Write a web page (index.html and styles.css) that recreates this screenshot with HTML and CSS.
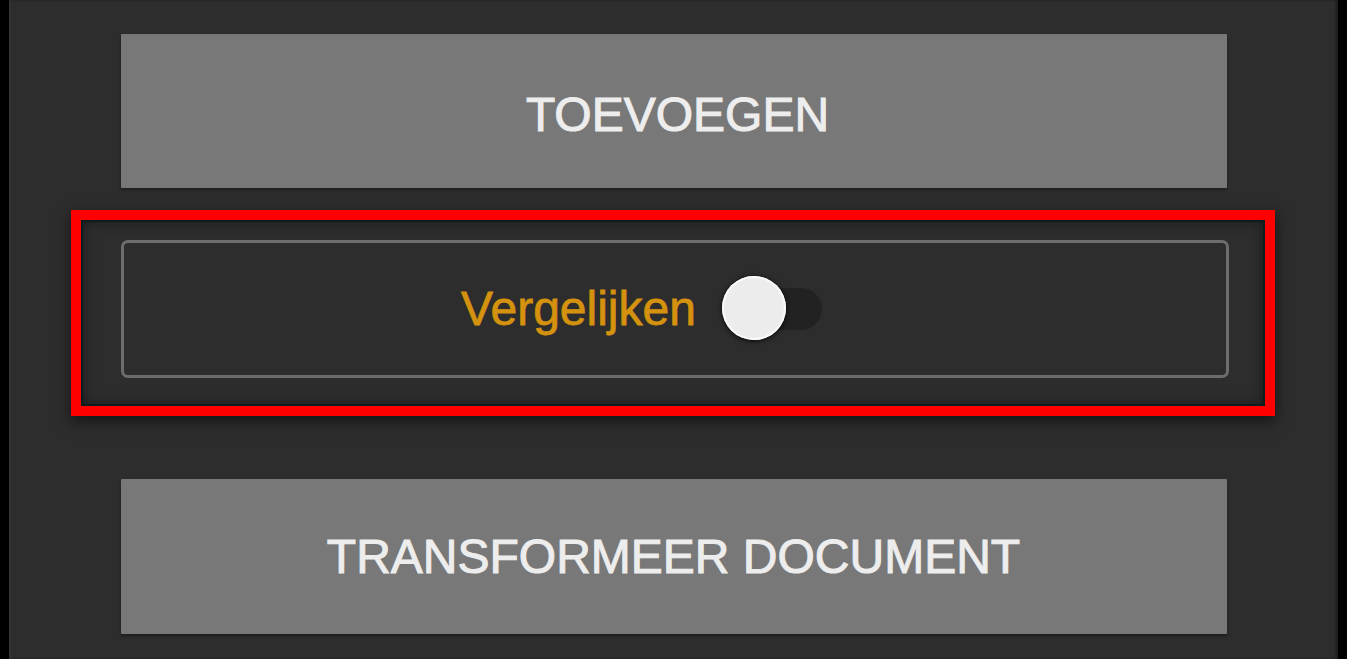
FILE: index.html
```html
<!DOCTYPE html>
<html lang="nl">
<head>
    <meta charset="UTF-8">
    <meta name="viewport" content="width=device-width, initial-scale=1.0">
    <title>Document transformeren</title>
    <link rel="stylesheet" href="styles.css">
</head>
<body>
    <div class="panel">
        <div class="stack">
            <button type="button" class="action action-top">TOEVOEGEN</button>
            <div class="highlight">
                <div class="compare-row">
                    <label for="compare" class="compare-label">Vergelijken</label>
                    <label class="switch">
                        <input type="checkbox" id="compare">
                        <span class="track"></span>
                        <span class="knob"></span>
                    </label>
                </div>
            </div>
            <button type="button" class="action action-bottom">TRANSFORMEER DOCUMENT</button>
        </div>
    </div>
</body>
</html>
```

FILE: styles.css
```css
html, body {
    margin: 0;
    padding: 0;
    height: 100%;
    background-color: #000;
    overflow: hidden;
}

body {
    font-family: "Liberation Sans", Arial, sans-serif;
}

.panel {
    margin: 0 9px;
    height: 100%;
    background-color: #2d2d2d;
    box-shadow: inset 2px 0 2px rgba(255, 255, 255, 0.04), inset -2px 0 3px rgba(0, 0, 0, 0.4);
    display: flex;
    justify-content: center;
}

.stack {
    width: 1106px;
    padding-top: 34px;
    display: flex;
    flex-direction: column;
}

.action {
    height: 154px;
    width: 100%;
    border: none;
    border-radius: 1px;
    background-color: #787878;
    color: #ededed;
    font-family: "Liberation Sans", Arial, sans-serif;
    font-size: 48px;
    -webkit-text-stroke: 1px #ededed;
    box-shadow: 0 2px 3px rgba(0, 0, 0, 0.35);
    cursor: pointer;
    padding: 0;
}

.action-top {
    padding: 6px 0 0 8px;
}

.action-bottom {
    height: 155px;
    margin-top: 63px;
}

.highlight {
    margin: 22px -48px 0 -50px;
    padding: 20px 36px 28px 40px;
    border: 10px solid #ff0000;
    box-shadow: inset 0 0 0 2px #0b1d1d, inset 0 0 14px rgba(0, 0, 0, 0.55), 0 5px 14px rgba(0, 0, 0, 0.55);
}

.compare-row {
    height: 132px;
    border: 3px solid #6d6d6d;
    border-radius: 7px;
    background-color: #2d2d2d;
    display: flex;
    align-items: center;
    justify-content: center;
    padding-right: 64px;
}

.compare-label {
    color: #d4920f;
    font-size: 48px;
    -webkit-text-stroke: 0.8px #d4920f;
    margin-right: 24px;
    margin-top: -2px;
}

.switch {
    position: relative;
    width: 104px;
    height: 70px;
    display: block;
    cursor: pointer;
}

.switch input {
    display: none;
}

.track {
    position: absolute;
    left: 14px;
    top: 14px;
    width: 88px;
    height: 42px;
    border-radius: 21px;
    background-color: #222;
}

.knob {
    position: absolute;
    left: 2px;
    top: 2px;
    width: 64px;
    height: 64px;
    border-radius: 50%;
    background-color: #ececec;
    box-shadow: 0 0 0 2px #fafafa inset, 0 1px 5px rgba(0, 0, 0, 0.9);
}
```
